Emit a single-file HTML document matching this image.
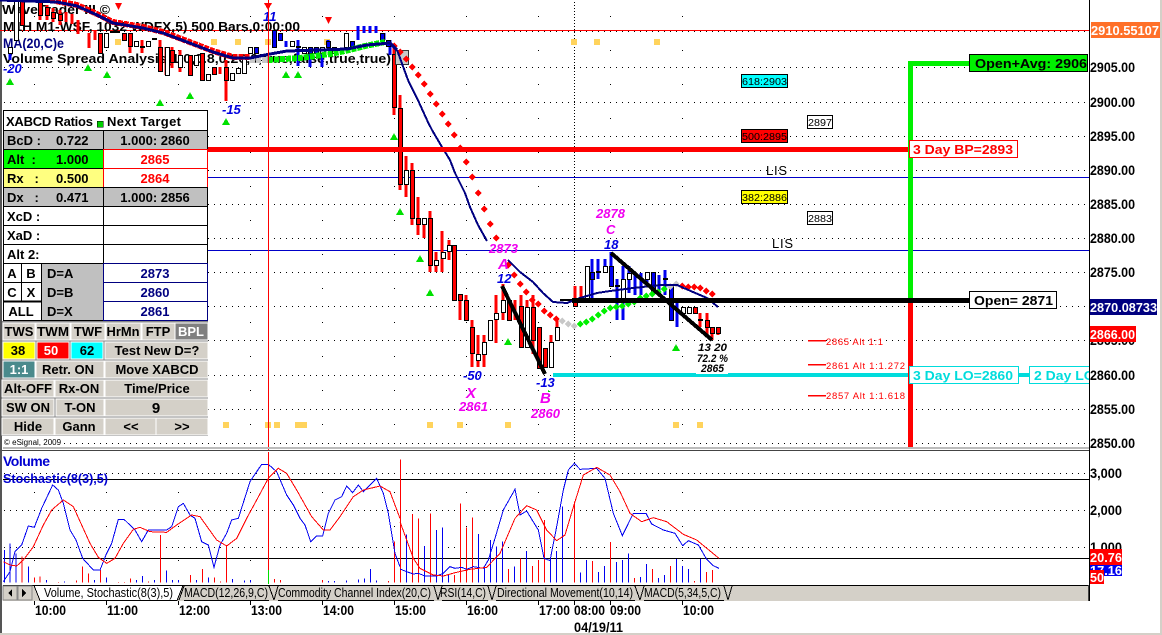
<!DOCTYPE html>
<html><head><meta charset="utf-8"><title>Chart</title>
<style>
html,body{margin:0;padding:0;background:#fff;width:1162px;height:635px;overflow:hidden}
svg{display:block;shape-rendering:crispEdges}
text{font-family:"Liberation Sans",sans-serif}
.b{font-weight:bold;font-size:13px}
.t{font-weight:bold;font-size:13px;fill:#000}
.c{text-anchor:middle}
.a{font-weight:bold;font-size:14px;fill:#000}
.i{font-weight:bold;font-style:italic;font-size:13px;fill:#0000e0}
.m{font-weight:bold;font-style:italic;font-size:13px;fill:#f000f0}
.r{font-size:9.5px;fill:#f00}
.tab{font-size:12.5px;fill:#000}
.w{font-weight:bold;font-size:13px;fill:#fff}
</style></head><body>
<svg width="1162" height="635" viewBox="0 0 1162 635" xmlns="http://www.w3.org/2000/svg">
<rect width="1162" height="635" fill="#fff"/>
<!-- frame -->
<rect x="0" y="0" width="2" height="633" fill="#555"/>
<rect x="1160" y="0" width="2" height="635" fill="#d4d0c8"/>
<rect x="0" y="633" width="1162" height="2" fill="#d4d0c8"/>
<!-- grid -->
<g stroke="#000" stroke-width="1" stroke-dasharray="1 5" fill="none">
<path d="M4 31.5H1085M4 67.5H1085M4 102.5H1085M4 136.5H1085M4 170.5H1085M4 204.5H1085M4 238.5H1085M4 272.5H1085M4 306.5H1085M4 340.5H1085M4 375.5H1085M4 409.5H1085M4 443.5H1085"/>
<path d="M4 473.5H1085M4 510.5H1085M4 547.5H1085"/>
</g>
<g stroke="#000" stroke-width="1" stroke-dasharray="1 33" fill="none">
<path d="M34.5 16V445M106.5 16V445M178.5 16V445M250.5 16V445M322.5 16V445M394.5 16V445M466.5 16V445M538.5 16V445M610.5 16V445M682.5 16V445"/>
<path d="M34.5 492V584M106.5 492V584M178.5 492V584M250.5 492V584M322.5 492V584M394.5 492V584M466.5 492V584M538.5 492V584M610.5 492V584M682.5 492V584"/>
</g>
<path d="M574.5 2V449M574.5 453V470" stroke="#000" stroke-dasharray="1 2" fill="none"/>
<!-- thin level lines -->
<path d="M0 30.5H1089" stroke="#f00"/>
<path d="M207 177.5H1089M207 250.5H1089" stroke="#0000c8"/>
<!-- heading text (beneath candles) -->
<text class="b" x="2" y="14" font-size="14" textLength="108" lengthAdjust="spacingAndGlyphs" fill="#000">WaveTrader III ©</text>
<text class="b" x="3" y="31" fill="#000" textLength="297" lengthAdjust="spacingAndGlyphs">M1H M1-WSF, 1032 WDFX,5) 500 Bars,0:00:00</text>
<text x="3" y="48" font-size="14" font-weight="bold" fill="#000080" textLength="61" lengthAdjust="spacingAndGlyphs">MA(20,C)e</text>
<text class="b" x="3" y="63" fill="#000" textLength="388" lengthAdjust="spacingAndGlyphs">Volume Spread Analysis(1.0,0.8,0.26,0,true,false,true,true)</text>
<!-- yellow squares -->
<path fill="#ffd35c" d="M115 39h6v6h-6zM211 39h6v6h-6zM235 39h6v6h-6zM265 39h6v6h-6zM324 39h6v6h-6zM571 39h6v6h-6zM594 39h6v6h-6zM654 39h6v6h-6zM223 422h6v6h-6zM265 422h6v6h-6zM274 422h6v6h-6zM295 422h6v6h-6zM301 422h6v6h-6zM427 422h6v6h-6zM457 422h6v6h-6zM505 422h6v6h-6zM673 422h6v6h-6zM697 422h6v6h-6z"/>
<!-- green triangles -->
<path fill="#00e000" d="M88 64l4 7h-8zM107 71l4 7h-8zM10 78l4 7h-8zM160 99l4 7h-8zM190 92l4 7h-8zM286 71l4 7h-8zM298 71l4 7h-8zM226 118l4 7h-8zM394 133l4 7h-8zM400 208l4 7h-8zM420 255l4 7h-8zM430 289l4 7h-8zM508 338l4 7h-8zM676 344l4 7h-8zM548 390l3 2h-3z"/>
<!-- red triangles -->
<path fill="#f00" d="M115 3h7l-3.500 7zM264 3h8l-4 7zM325 17h7l-3.500 7z"/>
<!-- wicks -->
<path fill="none" stroke="#f00" stroke-width="3" d="M16 0V40M22 0V25M40 0V20M47 5V20M53 8V22M60 10V25M66 12V22M72 14V24M78 20V34M89 33V48M95 30V40M100 33V53M106 33V47M124 33V40M130 33V53M142 40V53M160 40V71M166 47V75M172 47V68M180 50V72M190 55V75M202 53V80M214 67V74M220 67V74M226 60V101M394 45V115M400 95V190M406 156V197M412 163V225M418 197V235M424 224V238M430 211V272M436 252V272M442 231V272M449 240V260M454 245V300M460 294V320M466 295V320M472 320V367M478 335V367M484 335V367M490 320V340M496 295V343M503 284V320M509 300V320M515 300V320M521 295V347M527 300V347M533 295V354M539 327V368M545 348V367M551 335V367M557 320V340M575 286V306M581 286V300M695 307V313M700 313V327M707 313V335M712 327V340M718 327V335"/>
<path fill="none" stroke="#0000f0" stroke-width="3" d="M10 47V60M256 47V53M274 30V47M280 33V40M286 41V47M298 40V66M310 47V67M316 47V53M322 47V67M328 40V47M352 41V47M358 26V40M364 26V33M370 26V33M376 26V33M384 33V40M390 40V55M592 259V300M598 259V279M605 259V266M611 252V286M617 279V320M623 266V320M629 266V293M635 273V295M641 273V295M647 272V285M653 272V293M659 275V295M665 270V295M671 286V320M677 300V327"/>
<!-- dashes -->
<path fill="none" stroke="#000" stroke-width="2" d="M110 32H120M152 39H157M140 47H145M296 47H301M596 272H601M615 286H620M663 279H668M698 320H703M560 300H572"/>
<!-- bodies -->
<path fill="#fff" stroke="#000" d="M8.500 47.500h4v6h-4zM14.500 0.500h4v40h-4zM104.500 33.500h4v14h-4zM134.500 41.500h4v5h-4zM146.500 41.500h4v5h-4zM165.500 47.500h4v28h-4zM178.500 55.500h4v12h-4zM194.500 55.500h4v10h-4zM206.500 74.500h4v6h-4zM230.500 73.500h4v7h-4zM236.500 68.500h4v5h-4zM242.500 55.500h4v18h-4zM248.500 47.500h4v6h-4zM260.500 54.500h4v6h-4zM290.500 41.500h4v5h-4zM302.500 47.500h4v6h-4zM320.500 47.500h4v6h-4zM332.500 47.500h4v6h-4zM344.500 33.500h4v14h-4zM404.500 170.500h4v14h-4zM422.500 218.500h4v6h-4zM434.500 260.500h4v5h-4zM441.500 252.500h4v6h-4zM447.500 245.500h4v6h-4zM476.500 354.500h4v6h-4zM482.500 342.500h4v12h-4zM488.500 320.500h4v20h-4zM494.500 313.500h4v6h-4zM501.500 300.500h4v12h-4zM525.500 307.500h4v40h-4zM549.500 342.500h4v25h-4zM555.500 327.500h4v13h-4zM585.500 266.500h4v34h-4zM603.500 266.500h4v6h-4zM621.500 279.500h4v21h-4zM627.500 273.500h4v6h-4zM645.500 272.500h4v7h-4zM681.500 307.500h4v6h-4zM687.500 307.500h4v6h-4z"/>
<path fill="#f00" stroke="#000" d="M20.500 0.500h4v25h-4zM38.500 0.500h4v15h-4zM45.500 7.500h4v8h-4zM51.500 12.500h4v6h-4zM58.500 14.500h4v6h-4zM98.500 33.500h4v20h-4zM122.500 33.500h4v7h-4zM128.500 33.500h4v13h-4zM158.500 47.500h4v24h-4zM170.500 50.500h4v12h-4zM188.500 55.500h4v20h-4zM200.500 53.500h4v27h-4zM212.500 67.500h4v7h-4zM224.500 67.500h4v13h-4zM392.500 54.500h4v53h-4zM398.500 108.500h4v76h-4zM410.500 170.500h4v48h-4zM416.500 218.500h4v6h-4zM428.500 218.500h4v47h-4zM452.500 245.500h4v55h-4zM458.500 294.500h4v6h-4zM464.500 300.500h4v20h-4zM470.500 327.500h4v26h-4zM507.500 300.500h4v20h-4zM519.500 306.500h4v41h-4zM531.500 307.500h4v33h-4zM537.500 327.500h4v41h-4zM543.500 348.500h4v19h-4zM573.500 300.500h4v6h-4zM693.500 307.500h4v6h-4zM705.500 320.500h4v7h-4zM710.500 327.500h4v6h-4zM716.500 327.500h4v6h-4z"/>
<path fill="#0000f0" stroke="#000" d="M254.500 47.500h4v6h-4zM272.500 30.500h4v17h-4zM278.500 33.500h4v7h-4zM308.500 47.500h4v6h-4zM314.500 47.500h4v6h-4zM326.500 41.500h4v6h-4zM350.500 41.500h4v5h-4zM380.500 33.500h4v7h-4zM386.500 40.500h4v6h-4zM590.500 272.500h4v7h-4zM609.500 266.500h4v20h-4zM651.500 272.500h4v21h-4zM669.500 286.500h4v34h-4z"/>
<!-- small icon -->
<rect x="395.500" y="50.500" width="13" height="14" fill="#c8c8c8" stroke="#333"/>
<!-- diamonds/lines left -->
<polyline fill="none" stroke="#f00" stroke-width="6" stroke-dasharray="5 1" points="50,0 77,5 97,14 113,22 143,27 163,32 187,41 213,51 233,57 250,57"/>
<polyline fill="none" stroke="#c8c8c8" stroke-width="6" stroke-dasharray="5 1" points="250,60 267,60"/>
<polyline fill="none" stroke="#00f000" stroke-width="6" stroke-dasharray="5 1" points="268,60 300,58 330,54 345,51 365,46 385,42"/>
<!-- red diamonds -->
<path fill="#f00" d="M394 42.500l3.500 3.500-3.500 3.500-3.500-3.500zM400 48.500l3.500 3.500-3.500 3.500-3.500-3.500zM406 55.500l3.500 3.500-3.500 3.500-3.500-3.500zM412 63.500l3.500 3.500-3.500 3.500-3.500-3.500zM418 71.500l3.500 3.500-3.500 3.500-3.500-3.500zM424 80.500l3.500 3.500-3.500 3.500-3.500-3.500zM430 90.500l3.500 3.500-3.500 3.500-3.500-3.500zM436 100.500l3.500 3.500-3.500 3.500-3.500-3.500zM442 110.500l3.500 3.500-3.500 3.500-3.500-3.500zM448 120.500l3.500 3.500-3.500 3.500-3.500-3.500zM454 131.500l3.500 3.500-3.500 3.500-3.500-3.500zM460 144.500l3.500 3.500-3.500 3.500-3.500-3.500zM466 158.500l3.500 3.500-3.500 3.500-3.500-3.500zM472 173.500l3.500 3.500-3.500 3.500-3.500-3.500zM478 189.500l3.500 3.500-3.500 3.500-3.500-3.500zM484 205.500l3.500 3.500-3.500 3.500-3.500-3.500zM490 220.500l3.500 3.500-3.500 3.500-3.500-3.500zM496 234.500l3.500 3.500-3.500 3.500-3.500-3.500zM508 261.500l3.500 3.500-3.500 3.500-3.500-3.500zM514 271.500l3.500 3.500-3.500 3.500-3.500-3.500zM520 280.500l3.500 3.500-3.500 3.500-3.500-3.500zM526 288.500l3.500 3.500-3.500 3.500-3.500-3.500zM532 296.500l3.500 3.500-3.500 3.500-3.500-3.500zM538 300.500l3.500 3.500-3.500 3.500-3.500-3.500zM544 307.500l3.500 3.500-3.500 3.500-3.500-3.500zM550 311.500l3.500 3.500-3.500 3.500-3.500-3.500zM556 315.500l3.500 3.500-3.500 3.500-3.500-3.500zM682 282.500l3.500 3.500-3.500 3.500-3.500-3.500zM688 283.500l3.500 3.500-3.500 3.500-3.500-3.500zM694 283.500l3.500 3.500-3.500 3.500-3.500-3.500zM700 284.500l3.500 3.500-3.500 3.500-3.500-3.500zM706 287.500l3.500 3.500-3.500 3.500-3.500-3.500zM712 290.500l3.500 3.500-3.500 3.500-3.500-3.500z"/>
<path fill="#c8c8c8" d="M562 317.500l3.500 3.500-3.500 3.500-3.500-3.500zM568 320.500l3.500 3.500-3.500 3.500-3.500-3.500zM574 322.500l3.500 3.500-3.500 3.500-3.500-3.500zM676 280.500l3.500 3.500-3.500 3.500-3.500-3.500zM670 283l3.500 3.500-3.500 3.500-3.500-3.500z"/>
<path fill="#00f000" d="M580 320.500l3.500 3.500-3.500 3.500-3.500-3.500zM586 318.500l3.500 3.500-3.500 3.500-3.500-3.500zM592 315.500l3.500 3.500-3.500 3.500-3.500-3.500zM598 311.500l3.500 3.500-3.500 3.500-3.500-3.500zM604 307.500l3.500 3.500-3.500 3.500-3.500-3.500zM610 304.500l3.500 3.500-3.500 3.500-3.500-3.500zM616 303.500l3.500 3.500-3.500 3.500-3.500-3.500zM622 302.500l3.500 3.500-3.500 3.500-3.500-3.500zM628 300.500l3.500 3.500-3.500 3.500-3.500-3.500zM634 298.500l3.500 3.500-3.500 3.500-3.500-3.500zM640 294.500l3.500 3.500-3.500 3.500-3.500-3.500zM646 292.500l3.500 3.500-3.500 3.500-3.500-3.500zM652 290.500l3.500 3.500-3.500 3.500-3.500-3.500zM658 288.500l3.500 3.500-3.500 3.500-3.500-3.500zM664 285.500l3.500 3.500-3.500 3.500-3.500-3.500z"/>
<!-- navy MA -->
<polyline fill="none" stroke="#000080" stroke-width="3" points="0,0 57,2 77,6 97,15 113,23 143,28 163,33 187,42 213,52 233,58 250,58 270,54 287,51 320,50 347,49 367,45 390,43 397,50"/>
<polyline fill="none" stroke="#000080" stroke-width="2" points="397,50 400,58 408,80 417,98 427,120 432,130 442,147 450,160 455,173 465,193 470,207 478,225 487,241"/>
<polyline fill="none" stroke="#000080" stroke-width="2" points="508,260 520,272 533,282 543,293 553,302 567,303 580,298 597,293 610,291 633,288 660,285 677,285 693,292 707,298 718,307"/>
<!-- thick levels -->
<rect x="207" y="147" width="702" height="5" fill="#f00"/>
<rect x="553" y="373" width="357" height="4" fill="#00dcdc"/>
<rect x="1018" y="373" width="13" height="4" fill="#00dcdc"/>
<rect x="909" y="61" width="61" height="5" fill="#00f000"/>
<rect x="908" y="61" width="5" height="239" fill="#00f000"/>
<rect x="908" y="300" width="5" height="147" fill="#f00"/>
<rect x="572" y="298" width="398" height="5" fill="#000"/>
<path d="M502 286L545 374M611 253L712 340" stroke="#000" stroke-width="4" fill="none"/>
<!-- ratio labels -->
<g font-size="10">
<rect x="741.500" y="74.500" width="46" height="13" fill="#00ffff" stroke="#000"/><text x="742" y="85" font-size="10" fill="#000" textLength="45" lengthAdjust="spacingAndGlyphs">618:2903</text>
<rect x="741.500" y="129.500" width="46" height="13" fill="#f00" stroke="#000"/><text x="742" y="140" font-size="10" fill="#000" textLength="45" lengthAdjust="spacingAndGlyphs">500:2895</text>
<rect x="741.500" y="190.500" width="46" height="13" fill="#ff0" stroke="#000"/><text x="742" y="201" font-size="10" fill="#000" textLength="45" lengthAdjust="spacingAndGlyphs">382:2886</text>
<rect x="807.500" y="115.500" width="25" height="13" fill="#fff" stroke="#000"/><text x="808" y="126" font-size="10" fill="#000" textLength="24" lengthAdjust="spacingAndGlyphs">2897</text>
<rect x="807.500" y="211.500" width="25" height="13" fill="#fff" stroke="#000"/><text x="808" y="222" font-size="10" fill="#000" textLength="24" lengthAdjust="spacingAndGlyphs">2883</text>
</g>
<text x="766" y="175" font-size="13" fill="#000" textLength="21">LIS</text>
<text x="772" y="248" font-size="13" fill="#000" textLength="21">LIS</text>
<!-- boxes -->
<rect x="969.500" y="54.500" width="118" height="17" fill="#00f000" stroke="#000"/>
<text x="975" y="68" class="b" font-size="14" fill="#000" textLength="112" lengthAdjust="spacingAndGlyphs">Open+Avg: 2906</text>
<rect x="909.500" y="140.500" width="108" height="17" fill="#fff" stroke="#f00"/>
<text x="913" y="154" class="b" fill="#f00" textLength="100" lengthAdjust="spacingAndGlyphs">3 Day BP=2893</text>
<rect x="969.500" y="291.500" width="87" height="17" fill="#fff" stroke="#000"/>
<text x="974" y="305" class="b" fill="#000" textLength="79" lengthAdjust="spacingAndGlyphs">Open= 2871</text>
<rect x="909.500" y="366.500" width="109" height="17" fill="#fff" stroke="#00dcdc"/>
<text x="913" y="380" class="b" fill="#00dcdc" textLength="100" lengthAdjust="spacingAndGlyphs">3 Day LO=2860</text>
<rect x="1029.500" y="366.500" width="70" height="17" fill="#fff" stroke="#00dcdc"/>
<text x="1034" y="380" class="b" fill="#00dcdc" textLength="100" lengthAdjust="spacingAndGlyphs">2 Day LO=2860</text>
<!-- alt labels -->
<path d="M808 340.500H826M808 364.500H826M808 395.500H826" stroke="#f00" stroke-width="1.500"/>
<text class="r" x="826" y="345" textLength="57">2865 Alt 1:1</text>
<text class="r" x="826" y="369" textLength="79">2861 Alt 1:1.272</text>
<text class="r" x="826" y="399" textLength="79">2857 Alt 1:1.618</text>
<!-- chart annotations -->
<text class="i" x="3" y="73">-20</text>
<text class="i" x="222" y="114">-15</text>
<text class="i" x="263" y="21">11</text>
<text class="i" x="463" y="380">-50</text>
<text class="i" x="497" y="283">12</text>
<text class="i" x="536" y="387">-13</text>
<text class="i" x="604" y="249">18</text>
<text class="m" x="466" y="398" style="font-size:15px">X</text>
<text class="m" x="459" y="411">2861</text>
<text class="m" x="489" y="253">2873</text>
<text class="m" x="498" y="269" style="font-size:15px">A</text>
<text class="m" x="540" y="403" style="font-size:15px">B</text>
<text class="m" x="531" y="418">2860</text>
<text class="m" x="596" y="218">2878</text>
<text class="m" x="606" y="234">C</text>
<rect x="696" y="343" width="32" height="31" fill="#fff"/>
<text x="698" y="351" font-size="11" font-weight="bold" font-style="italic" fill="#000" textLength="29" lengthAdjust="spacingAndGlyphs">13 20</text>
<text x="697" y="362" font-size="11" font-weight="bold" font-style="italic" fill="#000" textLength="31" lengthAdjust="spacingAndGlyphs">72.2 %</text>
<text x="701" y="372" font-size="11" font-weight="bold" font-style="italic" fill="#000" textLength="23" lengthAdjust="spacingAndGlyphs">2865</text>
<!-- chart right clip -->
<rect x="1090" y="0" width="70" height="600" fill="#fff"/>
<path d="M268.500 0V450" stroke="#f00"/>
<rect x="3" y="447" width="1086" height="2" fill="#bbb"/>
<rect x="2" y="450" width="1087" height="1" fill="#444"/>
<!-- lower panel -->
<rect x="3" y="479" width="1086" height="1" fill="#000"/>
<rect x="3" y="558" width="1086" height="1" fill="#000"/>
<text x="3" y="466" font-size="14" font-weight="bold" fill="#0000d0" textLength="47">Volume</text>
<text x="3" y="483" font-size="13" font-weight="bold" fill="#0000d0" textLength="105" lengthAdjust="spacingAndGlyphs">Stochastic(8(3),5)</text>
<!-- volume bars left -->
<g transform="translate(0,450) scale(.33333)" fill="none" stroke-width="3">
<path stroke="#0000f0" d="M13 398V300M30 398V280M48 398V310M85 398V350M139 398V390M193 398V395M283 398V390M319 398V383M409 398V390M427 398V378M463 398V390M499 398V362M517 398V390M535 398V390M589 398V390M625 398V383M697 398V387M733 398V392M751 398V390M985 398V393M1003 398V393M1039 398V392M1075 398V388M1093 398V385M1111 398V357M1129 398V392"/>
<path stroke="#f00" d="M66 398V320M103 398V383M120 398V380M175 398V396M229 398V392M247 398V350M265 398V370M301 398V360M355 398V396M373 398V396M391 398V385M445 398V395M481 398V255M571 398V375M607 398V357M643 398V383M661 398V395M679 398V285M823 398V387M841 398V390M967 398V390M1165 398V393M1183 398V275"/>
<polyline stroke="#0000f0" points="10,395 30,365 45,305 65,285 85,228 103,232 125,175 158,105 175,120 190,160 210,240 228,270 248,325 280,360 300,360 320,310 335,280 355,208 372,208 405,240 425,275 445,240 500,240 515,230 535,170 550,160 570,195 585,205 605,275 625,285 642,352 660,285 680,250 695,210 715,205 750,95 785,43 805,43 830,65 860,135 880,165 900,205 915,225 932,275 950,258 968,258 985,190 1005,150 1025,140 1040,108 1058,128 1075,105 1090,125 1130,85 1150,130 1165,190 1185,310 1200,350"/>
<polyline stroke="#f00" points="10,335 30,345 50,348 70,330 100,290 130,225 155,180 190,150 220,170 245,225 270,280 295,322 320,340 345,325 370,280 400,238 420,232 450,245 500,247 530,225 575,195 600,200 625,235 650,270 680,288 710,265 740,205 770,150 805,85 835,55 860,70 890,120 935,200 970,240 990,240 1020,200 1060,140 1090,120 1140,108 1170,125 1200,205"/>
</g>
<g transform="translate(400,450) scale(.33333)" fill="none" stroke-width="3">
<path stroke="#0000f0" d="M19 398V253M73 398V288M109 398V240M127 398V232M145 398V372M235 398V252M253 398V350M271 398V270M289 398V290M307 398V275M343 398V350M379 398V303M451 398V325M469 398V303M487 398V170M541 398V368M559 398V330M595 398V366M613 398V348M649 398V336M667 398V330M685 398V310M721 398V381M739 398V342M775 398V384M793 398V375M829 398V327M847 398V348M865 398V357M901 398V327"/>
<path stroke="#f00" d="M1 398V28M37 398V192M55 398V205M91 398V190M163 398V375M181 398V160M199 398V233M217 398V202M325 398V357M361 398V325M397 398V348M415 398V330M433 398V210M523 398V155M577 398V333M631 398V276M703 398V384M757 398V357M811 398V348M883 398V393M919 398V366M937 398V360"/>
<polyline stroke="#0000f0" points="0,357 20,365 40,372 55,370 75,378 110,378 130,370 150,350 165,355 185,352 200,358 220,350 250,355 265,330 285,265 310,180 345,118 360,195 380,183 415,240 432,325 450,332 470,230 490,120 505,60 523,40 540,58 590,55 615,85 640,190 667,257 700,190 738,190 755,222 790,240 825,250 848,287 865,272 895,285 920,328 940,347 957,355"/>
<polyline stroke="#f00" points="0,215 20,270 40,325 60,355 100,375 130,378 165,368 210,358 260,352 300,310 345,205 380,167 410,180 440,240 470,272 495,255 525,155 550,75 590,52 630,75 660,125 690,190 725,215 760,203 800,215 850,253 890,270 957,325"/>
</g>
<path d="M268.500 452V570" stroke="#f00"/>
<path d="M268.500 570V584" stroke="#00e000"/>
<!-- right axis line -->
<rect x="1089" y="0" width="1" height="601" fill="#000"/>
<!-- price axis -->
<g class="a">
<text class="a" x="1090" y="72" textLength="45" lengthAdjust="spacingAndGlyphs">2905.00</text>
<text class="a" x="1090" y="107" textLength="45" lengthAdjust="spacingAndGlyphs">2900.00</text>
<text class="a" x="1090" y="141" textLength="45" lengthAdjust="spacingAndGlyphs">2895.00</text>
<text class="a" x="1090" y="175" textLength="45" lengthAdjust="spacingAndGlyphs">2890.00</text>
<text class="a" x="1090" y="209" textLength="45" lengthAdjust="spacingAndGlyphs">2885.00</text>
<text class="a" x="1090" y="243" textLength="45" lengthAdjust="spacingAndGlyphs">2880.00</text>
<text class="a" x="1090" y="277" textLength="45" lengthAdjust="spacingAndGlyphs">2875.00</text>
<text class="a" x="1090" y="345" textLength="45" lengthAdjust="spacingAndGlyphs">2865.00</text>
<text class="a" x="1090" y="380" textLength="45" lengthAdjust="spacingAndGlyphs">2860.00</text>
<text class="a" x="1090" y="414" textLength="45" lengthAdjust="spacingAndGlyphs">2855.00</text>
<text class="a" x="1090" y="448" textLength="45" lengthAdjust="spacingAndGlyphs">2850.00</text>
<text class="a" x="1090" y="478" textLength="32" lengthAdjust="spacingAndGlyphs">3,000</text>
<text class="a" x="1090" y="515" textLength="32" lengthAdjust="spacingAndGlyphs">2,000</text>
<text class="a" x="1090" y="552" textLength="32" lengthAdjust="spacingAndGlyphs">1,000</text>
</g>
<rect x="1091" y="22" width="69" height="16" fill="#ff7028"/>
<text class="w" x="1091" y="35" textLength="68" lengthAdjust="spacingAndGlyphs">2910.55107</text>
<rect x="1090" y="299" width="67" height="16" fill="#000080"/>
<text class="w" x="1090" y="312" textLength="67" lengthAdjust="spacingAndGlyphs">2870.08733</text>
<rect x="1090" y="326" width="46" height="16" fill="#f00"/>
<text class="w" x="1090" y="339" textLength="45" lengthAdjust="spacingAndGlyphs">2866.00</text>
<rect x="1090" y="565" width="32" height="11" fill="#0000f0"/>
<text class="w" x="1090" y="575" textLength="32" lengthAdjust="spacingAndGlyphs">17.16</text>
<rect x="1090" y="549" width="32" height="16" fill="#f00"/>
<text class="w" x="1090" y="562" textLength="32" lengthAdjust="spacingAndGlyphs">20.76</text>
<rect x="1090" y="570" width="14" height="14" fill="#f00"/>
<text class="w" x="1090" y="582" textLength="14" lengthAdjust="spacingAndGlyphs">50</text>
<!-- tab bar -->
<rect x="3" y="585" width="1085" height="16" fill="#d4d0c8"/>
<rect x="3" y="585" width="1086" height="1" fill="#000"/>
<rect x="1088" y="585" width="1" height="16" fill="#444"/>
<rect x="3" y="586" width="14" height="14" fill="#d4d0c8" stroke="#888"/>
<rect x="18" y="586" width="14" height="14" fill="#d4d0c8" stroke="#888"/>
<path d="M12 589l-4 4 4 4zM22 589l4 4-4 4z" fill="#000"/>
<path d="M34 585.500L40 600.500H177L183 585.500Z" fill="#fff" stroke="#000"/>
<path d="M179 600L184 586M269 586L274 600M274 600L278 586M434 586L438 600M438 600L442 586M488 586L492 600M492 600L496 586M635 586L640 600M640 600L644 586M724 586L728 600M728 600L732 586" stroke="#000" fill="none"/>
<path d="M184 600.500H269M278 600.500H434M442 600.500H488M496 600.500H635M644 600.500H724" stroke="#000"/>
<text class="tab" x="44" y="597" textLength="129" lengthAdjust="spacingAndGlyphs">Volume, Stochastic(8(3),5)</text>
<text class="tab" x="184" y="597" textLength="84" lengthAdjust="spacingAndGlyphs">MACD(12,26,9,C)</text>
<text class="tab" x="278" y="597" textLength="153" lengthAdjust="spacingAndGlyphs">Commodity Channel Index(20,C)</text>
<text class="tab" x="440" y="597" textLength="46" lengthAdjust="spacingAndGlyphs">RSI(14,C)</text>
<text class="tab" x="497" y="597" textLength="136" lengthAdjust="spacingAndGlyphs">Directional Movement(10,14)</text>
<text class="tab" x="644" y="597" textLength="77" lengthAdjust="spacingAndGlyphs">MACD(5,34,5,C)</text>
<!-- time axis -->
<path d="M34.500 601V605M106.500 601V605M178.500 601V605M250.500 601V605M322.500 601V605M394.500 601V605M466.500 601V605M538.500 601V605M574.500 601V605M610.500 601V605M682.500 601V605" stroke="#000"/>
<g>
<text class="a" x="35" y="615" textLength="31" lengthAdjust="spacingAndGlyphs">10:00</text>
<text class="a" x="107" y="615" textLength="31" lengthAdjust="spacingAndGlyphs">11:00</text>
<text class="a" x="179" y="615" textLength="31" lengthAdjust="spacingAndGlyphs">12:00</text>
<text class="a" x="251" y="615" textLength="31" lengthAdjust="spacingAndGlyphs">13:00</text>
<text class="a" x="323" y="615" textLength="31" lengthAdjust="spacingAndGlyphs">14:00</text>
<text class="a" x="395" y="615" textLength="31" lengthAdjust="spacingAndGlyphs">15:00</text>
<text class="a" x="467" y="615" textLength="31" lengthAdjust="spacingAndGlyphs">16:00</text>
<text class="a" x="539" y="615" textLength="31" lengthAdjust="spacingAndGlyphs">17:00</text>
<text class="a" x="574" y="615" textLength="31" lengthAdjust="spacingAndGlyphs">08:00</text>
<text class="a" x="610" y="615" textLength="31" lengthAdjust="spacingAndGlyphs">09:00</text>
<text class="a" x="683" y="615" textLength="31" lengthAdjust="spacingAndGlyphs">10:00</text>
<text class="a" x="574" y="632" textLength="49" lengthAdjust="spacingAndGlyphs">04/19/11</text>
</g>
<!-- XABCD panel -->
<rect x="2" y="110" width="206" height="325" fill="#fff"/>
<rect x="3.500" y="110.500" width="204" height="20" fill="#fff" stroke="#000"/>
<text class="t" x="6" y="126" textLength="87">XABCD Ratios</text>
<rect x="97" y="121" width="6" height="6" fill="#00d000" stroke="#000" stroke-width=".5"/>
<text class="t" x="107" y="126" textLength="74">Next Target</text>
<!-- rows -->
<rect x="3.500" y="130.500" width="100" height="19" fill="#c0c0c0" stroke="#000"/>
<rect x="103.500" y="130.500" width="104" height="19" fill="#c0c0c0" stroke="#000"/>
<rect x="3.500" y="149.500" width="100" height="19" fill="#00ff00" stroke="#000"/>
<rect x="103.500" y="149.500" width="104" height="19" fill="#fff" stroke="#f00"/>
<rect x="3.500" y="168.500" width="100" height="19" fill="#ffff80" stroke="#000"/>
<rect x="103.500" y="168.500" width="104" height="19" fill="#fff" stroke="#f00"/>
<rect x="3.500" y="187.500" width="100" height="19" fill="#c0c0c0" stroke="#000"/>
<rect x="103.500" y="187.500" width="104" height="19" fill="#c0c0c0" stroke="#000"/>
<rect x="3.500" y="206.500" width="100" height="19" fill="#fff" stroke="#000"/>
<rect x="103.500" y="206.500" width="104" height="19" fill="#fff" stroke="#000"/>
<rect x="3.500" y="225.500" width="100" height="19" fill="#fff" stroke="#000"/>
<rect x="103.500" y="225.500" width="104" height="19" fill="#fff" stroke="#000"/>
<rect x="3.500" y="244.500" width="100" height="19" fill="#fff" stroke="#000"/>
<rect x="103.500" y="244.500" width="104" height="19" fill="#fff" stroke="#000"/>
<rect x="42" y="263" width="62" height="57" fill="#c0c0c0"/>
<path d="M3.500 263.500H104M3.500 282.500H42M3.500 301.500H42" stroke="#000"/>
<path d="M3.500 263V320M21.500 263V301M41.500 263V320" stroke="#000"/>
<path d="M3 301.500H42" stroke="#000" stroke-width="2"/>
<path d="M3 320.500H104" stroke="#000"/>
<rect x="103.500" y="263.500" width="104" height="19" fill="#fff" stroke="#000080"/>
<rect x="103.500" y="282.500" width="104" height="19" fill="#fff" stroke="#000080"/>
<rect x="103.500" y="301.500" width="104" height="19" fill="#fff" stroke="#000080"/>
<g class="t">
<text class="t" x="7" y="145">BcD :</text><text class="t" x="56" y="145">0.722</text><text class="t c" x="155" y="145">1.000: 2860</text>
<text class="t" x="7" y="164">Alt&#160;&#160;:</text><text class="t" x="56" y="164">1.000</text><text class="t c" x="155" y="164" style="fill:#f00">2865</text>
<text class="t" x="7" y="183">Rx&#160;&#160;&#160;:</text><text class="t" x="56" y="183">0.500</text><text class="t c" x="155" y="183" style="fill:#f00">2864</text>
<text class="t" x="7" y="202">Dx&#160;&#160;&#160;:</text><text class="t" x="56" y="202">0.471</text><text class="t c" x="155" y="202">1.000: 2856</text>
<text class="t" x="7" y="221">XcD :</text>
<text class="t" x="7" y="240">XaD :</text>
<text class="t" x="7" y="259">Alt 2:</text>
<text class="t c" x="12" y="278">A</text><text class="t c" x="31" y="278">B</text><text class="t" x="47" y="278">D=A</text><text class="t c" x="155" y="278" style="fill:#000080">2873</text>
<text class="t c" x="12" y="297">C</text><text class="t c" x="31" y="297">X</text><text class="t" x="47" y="297">D=B</text><text class="t c" x="155" y="297" style="fill:#000080">2860</text>
<text class="t c" x="21" y="316">ALL</text><text class="t" x="47" y="316">D=X</text><text class="t c" x="155" y="316" style="fill:#000080">2861</text>
</g>
<!-- buttons -->
<rect x="2" y="321" width="206" height="115" fill="#888"/>
<g stroke="#fff" stroke-width="1">
<rect x="3" y="323" width="32" height="17" fill="#d4d0c8"/>
<rect x="36" y="323" width="34" height="17" fill="#d4d0c8"/>
<rect x="71" y="323" width="34" height="17" fill="#d4d0c8"/>
<rect x="106" y="323" width="35" height="17" fill="#d4d0c8"/>
<rect x="142" y="323" width="33" height="17" fill="#d4d0c8"/>
<rect x="175" y="323" width="33" height="17" fill="#808080"/>
<rect x="3" y="342" width="32" height="17" fill="#ff0"/>
<rect x="37" y="342" width="32" height="17" fill="#f00"/>
<rect x="71" y="342" width="32" height="17" fill="#0ff"/>
<rect x="105" y="342" width="103" height="17" fill="#d4d0c8"/>
<rect x="3" y="361" width="32" height="17" fill="#4a8a8c"/>
<rect x="36" y="361" width="68" height="17" fill="#d4d0c8"/>
<rect x="105" y="361" width="103" height="17" fill="#d4d0c8"/>
<rect x="2" y="380" width="52" height="17" fill="#d4d0c8"/>
<rect x="55" y="380" width="49" height="17" fill="#d4d0c8"/>
<rect x="105" y="380" width="103" height="17" fill="#d4d0c8"/>
<rect x="2" y="399" width="52" height="17" fill="#d4d0c8"/>
<rect x="56" y="399" width="48" height="17" fill="#d4d0c8"/>
<rect x="105" y="399" width="103" height="17" fill="#d4d0c8"/>
<rect x="2" y="418" width="52" height="17" fill="#d4d0c8"/>
<rect x="55" y="418" width="49" height="17" fill="#d4d0c8"/>
<rect x="105" y="418" width="51" height="17" fill="#d4d0c8"/>
<rect x="156" y="418" width="52" height="17" fill="#d4d0c8"/>
</g>
<text class="t c" x="19" y="336">TWS</text>
<text class="t c" x="53" y="336" textLength="32" lengthAdjust="spacingAndGlyphs">TWM</text>
<text class="t c" x="88" y="336">TWF</text>
<text class="t c" x="123" y="336" textLength="33" lengthAdjust="spacingAndGlyphs">HrMn</text>
<text class="t c" x="158" y="336">FTP</text>
<text class="t c" x="191" y="336" style="fill:#fff">BPL</text>
<text class="t c" x="18" y="355">38</text>
<text class="t c" x="51" y="355" style="fill:#fff">50</text>
<text class="t c" x="87" y="355">62</text>
<text class="t c" x="157" y="355">Test New D=?</text>
<text class="t c" x="19" y="374" style="fill:#fff">1:1</text>
<text class="t c" x="68" y="374">Retr. ON</text>
<text class="t c" x="157" y="374">Move XABCD</text>
<text class="t c" x="28" y="393" textLength="48" lengthAdjust="spacingAndGlyphs">Alt-OFF</text>
<text class="t c" x="79" y="393">Rx-ON</text>
<text class="t c" x="157" y="393">Time/Price</text>
<text class="t c" x="28" y="412">SW ON</text>
<text class="t c" x="80" y="412">T-ON</text>
<text class="t c" x="156" y="413" style="font-size:15px">9</text>
<text class="t c" x="28" y="431">Hide</text>
<text class="t c" x="79" y="431">Gann</text>
<text class="t c" x="131" y="431">&lt;&lt;</text>
<text class="t c" x="182" y="431">&gt;&gt;</text>
<rect x="2" y="436" width="60" height="11" fill="#fff"/>
<text x="4" y="445" font-size="8" fill="#000">© eSignal, 2009</text>
</svg>
</body></html>
